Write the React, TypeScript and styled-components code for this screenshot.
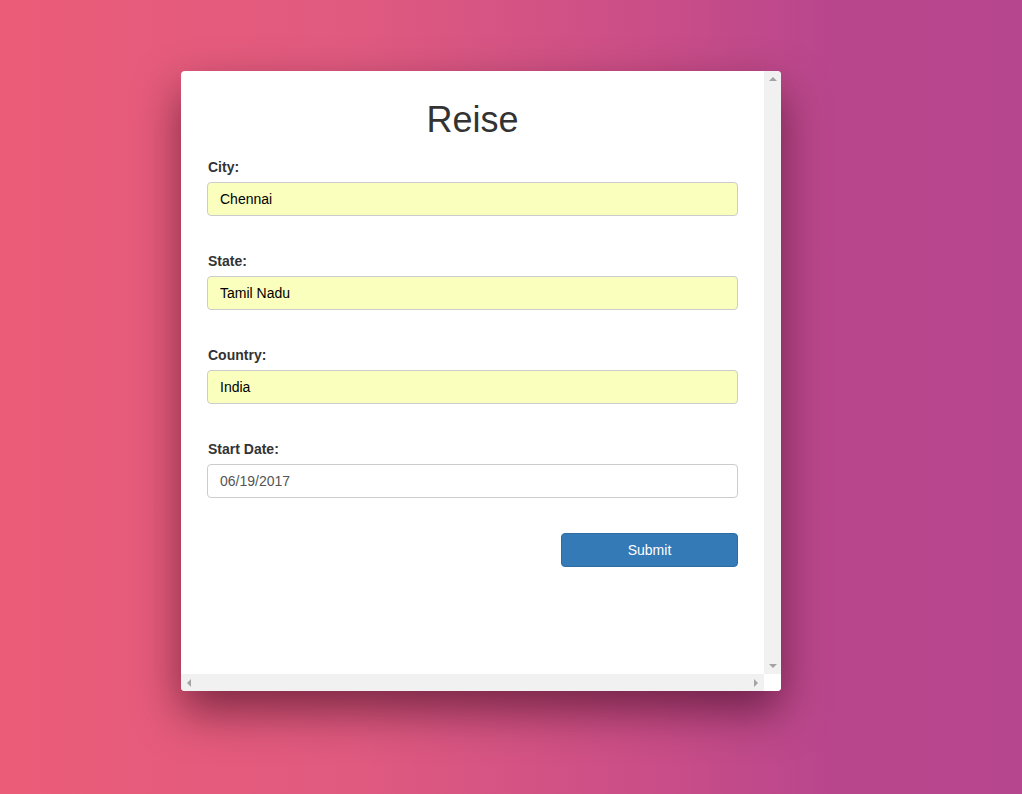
import styled, { createGlobalStyle } from "styled-components";

const GlobalStyle = createGlobalStyle`
  html, body {
    margin: 0;
    padding: 0;
  }
  body {
    font-family: "Liberation Sans", Arial, sans-serif;
    font-size: 14px;
    color: #333;
  }
  * {
    box-sizing: border-box;
  }
`;

const Page = styled.div`
  min-height: 794px;
  padding: 71px 0 0 181px;
  background: linear-gradient(to right, #eb5c78 0%, #e05a80 35%, #c94d88 65%, #b8468d 82%, #b6468e 100%);
`;

const Card = styled.div`
  width: 600px;
  height: 620px;
  background: #fff;
  border-radius: 4px;
  box-shadow: 0 20px 45px rgba(40, 0, 20, 0.55);
  display: grid;
  grid-template-columns: 1fr 17px;
  grid-template-rows: 1fr 17px;
  overflow: hidden;
`;

const Content = styled.form`
  padding: 29px 26px 0 26px;
  display: flex;
  flex-direction: column;
`;

const Title = styled.h1`
  margin: 0 0 17px;
  font-size: 36px;
  font-weight: 400;
  line-height: 40px;
  text-align: center;
  color: #333;
`;

const Group = styled.div`
  display: flex;
  flex-direction: column;
  margin-bottom: 35px;
`;

const Label = styled.label`
  font-weight: 700;
  font-size: 14px;
  line-height: 20px;
  margin-bottom: 5px;
  padding-left: 1px;
`;

const Input = styled.input<{ $filled?: boolean }>`
  height: 34px;
  width: 100%;
  padding: 6px 12px;
  font-family: "Liberation Sans", Arial, sans-serif;
  font-size: 14px;
  color: ${(p) => (p.$filled ? "#000" : "#555")};
  background: ${(p) => (p.$filled ? "#faffbd" : "#fff")};
  border: 1px solid #ccc;
  border-radius: 4px;
  outline: none;
`;

const Actions = styled.div`
  display: flex;
  justify-content: flex-end;
`;

const Button = styled.button`
  width: 177px;
  height: 34px;
  background: #337ab7;
  border: 1px solid #2e6da4;
  border-radius: 4px;
  color: #fff;
  font-family: "Liberation Sans", Arial, sans-serif;
  font-size: 14px;
`;

const VTrack = styled.div`
  background: #f1f1f1;
  display: flex;
  flex-direction: column;
  justify-content: space-between;
  align-items: center;
  padding: 6px 0;
`;

const HTrack = styled.div`
  background: #f1f1f1;
  display: flex;
  justify-content: space-between;
  align-items: center;
  padding: 0 6px;
`;

const Corner = styled.div`
  background: #fff;
`;

const Arrow = styled.span<{ $dir: "up" | "down" | "left" | "right" }>`
  width: 0;
  height: 0;
  border-style: solid;
  ${(p) =>
    p.$dir === "up"
      ? "border-width: 0 4px 4px 4px; border-color: transparent transparent #a3a3a3 transparent;"
      : p.$dir === "down"
      ? "border-width: 4px 4px 0 4px; border-color: #a3a3a3 transparent transparent transparent;"
      : p.$dir === "left"
      ? "border-width: 4px 4px 4px 0; border-color: transparent #a3a3a3 transparent transparent;"
      : "border-width: 4px 0 4px 4px; border-color: transparent transparent transparent #a3a3a3;"}
`;

const fields = [
  { id: "city", label: "City:", value: "Chennai", filled: true },
  { id: "state", label: "State:", value: "Tamil Nadu", filled: true },
  { id: "country", label: "Country:", value: "India", filled: true },
  { id: "start", label: "Start Date:", value: "06/19/2017", filled: false },
];

export default function App() {
  return (
    <>
      <GlobalStyle />
      <Page>
        <Card>
          <Content onSubmit={(e) => e.preventDefault()}>
            <Title>Reise</Title>
            {fields.map((f) => (
              <Group key={f.id}>
                <Label htmlFor={f.id}>{f.label}</Label>
                <Input id={f.id} defaultValue={f.value} $filled={f.filled} />
              </Group>
            ))}
            <Actions>
              <Button type="submit">Submit</Button>
            </Actions>
          </Content>
          <VTrack>
            <Arrow $dir="up" />
            <Arrow $dir="down" />
          </VTrack>
          <HTrack>
            <Arrow $dir="left" />
            <Arrow $dir="right" />
          </HTrack>
          <Corner />
        </Card>
      </Page>
    </>
  );
}
